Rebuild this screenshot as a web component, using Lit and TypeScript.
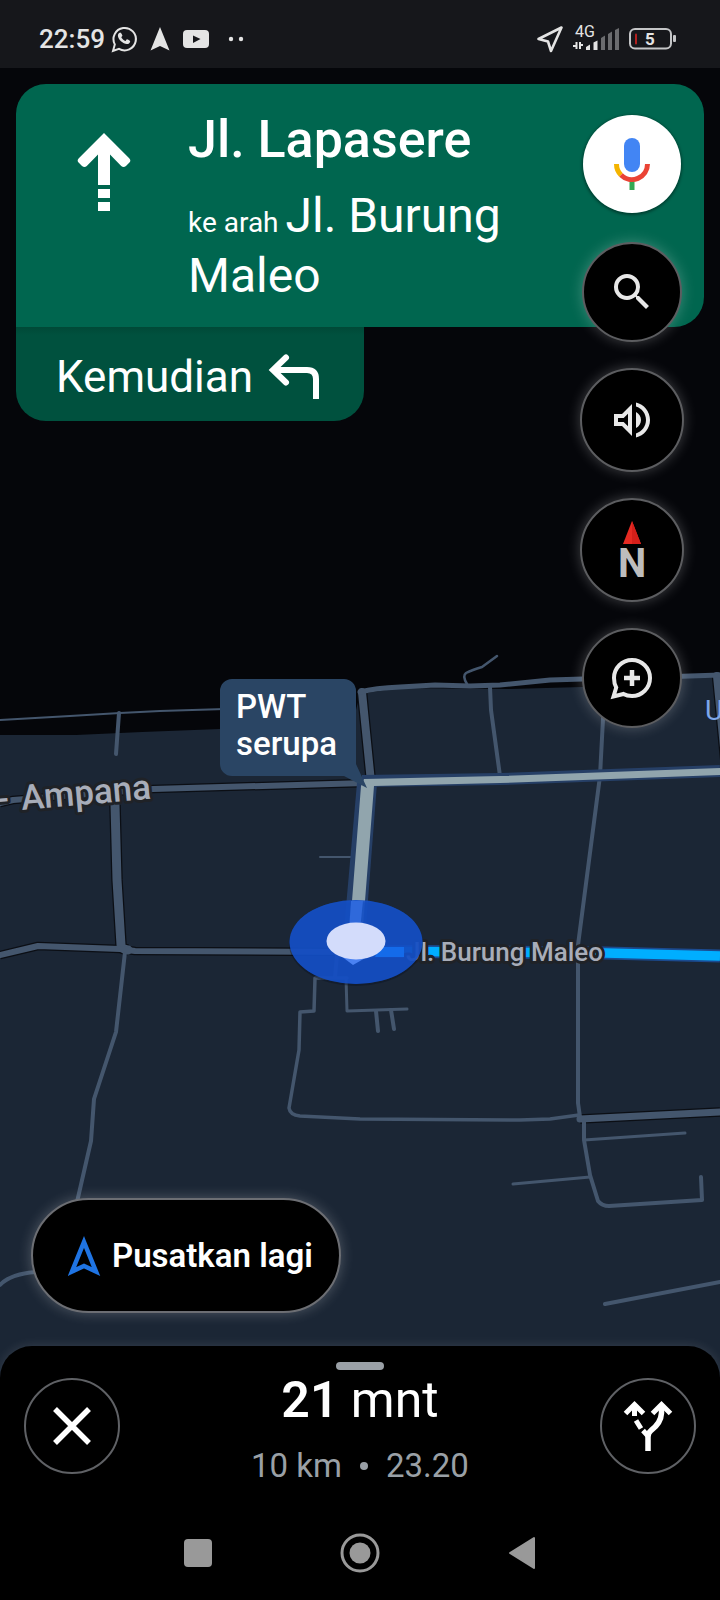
import { LitElement, html, svg, css } from "lit";
import { customElement } from "lit/decorators.js";

interface Road {
  d: string;
  w: number;
  edged?: boolean;
}

const ROADS: Road[] = [
  { d: "M0 720 L70 716 L120 713 L160 711 L225 709", w: 2 },
  { d: "M119 713 L116 754", w: 4 },
  { d: "M467 684 Q462 676 466 673 Q472 670 482 667 L497 656", w: 2.5 },
  { d: "M490 687 L491 710 L500 776", w: 4 },
  { d: "M604 700 L600 776 L578 945 L578 1103 L580 1117", w: 4 },
  { d: "M320 857 L352 857", w: 2 },
  { d: "M125 952 L116 1032 L94 1099 L91 1141 L77 1202", w: 4 },
  { d: "M0 1285 Q10 1274 36 1272", w: 4 },
  { d: "M337 955 L335 977", w: 4 },
  { d: "M347 978 L315 978 L314 1011 L300 1012 L299 1050 L289 1108 Q290 1115 300 1116 L360 1119 L520 1120 L550 1119 L579 1115", w: 3.5 },
  { d: "M346 978 L347 1011 L407 1009", w: 3 },
  { d: "M376 1011 L378 1031", w: 4 },
  { d: "M391 1010 L394 1029", w: 4 },
  { d: "M584 1122 L584 1140 L590 1175 L598 1201 Q602 1206 609 1206 L702 1200 L701 1177", w: 4 },
  { d: "M584 1140 L685 1133", w: 3 },
  { d: "M590 1177 L513 1184", w: 3 },
  { d: "M605 1304 L720 1282", w: 4 },
  { d: "M362 692 L371 782", w: 8, edged: true },
  { d: "M717 676 L726 768", w: 8, edged: true },
  { d: "M0 803 L13 800 L153 789 L366 783", w: 6, edged: true },
  { d: "M115 805 L117 880 L121 945 Q121 949 128 950", w: 9, edged: true },
  { d: "M0 955 L38 946 L120 949 L135 951 L350 952", w: 6, edged: true },
  { d: "M580 1119 L720 1112", w: 7, edged: true },
  { d: "M360 692 Q375 688 400 687 L435 685 L470 686 L500 685 L550 680 L583 679 L660 677 L720 675", w: 5 },
];

@customElement("status-bar")
class StatusBar extends LitElement {
  static styles = css`
    :host {
      display: flex;
      align-items: center;
      justify-content: space-between;
      box-sizing: border-box;
      height: 68px;
      padding: 10px 43px 0 39px;
      background: #16171b;
      color: #e4e4e4;
      font-family: Roboto, sans-serif;
    }
    .group { display: flex; align-items: center; gap: 13px; }
    .clock { font-size: 26px; line-height: 32px; font-weight: 500; }
    .left { gap: 6px; }
    .right { gap: 10px; }
    .dots { margin-left: 6px; }
    svg { display: block; overflow: visible; }
    .net { font-size: 16px; fill: #e4e4e4; }
    .battery { font-size: 17px; font-weight: 700; fill: #e4e4e4; }
  `;

  render() {
    return html`
      <div class="group left">
        <time class="clock">22:59</time>
        <div class="group">
          <svg width="26" height="28" viewBox="0 0 26 28" aria-hidden="true">
            <path d="M2 26 L3.8 19.4 A11.2 11.2 0 1 1 8 23.8 Z" fill="none" stroke="#e4e4e4" stroke-width="2"/>
            <path d="M9.2 7.4c-.6 0-2.3 1.1-2.3 3.2 0 3.9 5.3 8.5 8.9 8.5 2 0 3.4-1.4 3.4-2.9 0-.5-2.6-1.9-3.2-1.9s-1 1.7-1.6 1.7c-1 0-4-2.7-4-3.7 0-.5 1-1 1-1.7 0-.6-1.1-3.2-2.2-3.2z" fill="#e4e4e4"/>
          </svg>
          <svg width="20" height="24" viewBox="0 0 20 24" aria-hidden="true">
            <path d="M10 0 L19.5 23.5 L10 19 L.5 23.5 Z" fill="#e4e4e4"/>
          </svg>
          <svg width="26" height="18" viewBox="0 0 26 18" aria-hidden="true">
            <rect width="26" height="18" rx="4" fill="#e4e4e4"/>
            <path d="M10 5.5 L17.5 9 L10 13 Z" fill="#16171b"/>
          </svg>
          <svg class="dots" width="16" height="6" viewBox="0 0 16 6" aria-hidden="true">
            <circle cx="3" cy="3" r="2.2" fill="#e4e4e4"/>
            <circle cx="13" cy="3" r="2.2" fill="#e4e4e4"/>
          </svg>
        </div>
      </div>
      <div class="group right">
        <svg width="26" height="27" viewBox="0 0 26 27" aria-hidden="true">
          <path d="M24.5 1.5 L14 25 L11 15.5 L1.5 13 Z" fill="none" stroke="#e4e4e4" stroke-width="2.6" stroke-linejoin="round"/>
        </svg>
        <svg width="46" height="26" viewBox="0 0 46 26" aria-label="4G">
          <text class="net" x="2" y="11">4G</text>
          <path d="M3.500 16 V23 M0 20 H3 M7 23 V16 M7 19 H10" stroke="#e4e4e4" stroke-width="2" fill="none"/>
          <path d="M13 24 V21 L17 18.5 V24 Z M20.5 24 V16.5 L24.5 14.5 V24 Z" fill="#e4e4e4"/>
          <path d="M28 24 V12 L32 9.5 V24 Z M35 24 V8 L39 5.5 V24 Z M42 24 V4 L46 2 V24 Z" fill="#6b6c6f"/>
        </svg>
        <svg width="48" height="22" viewBox="0 0 48 22" aria-label="5%">
          <rect x="1" y="1" width="41" height="19.5" rx="5" fill="none" stroke="#c4c5c7" stroke-width="2"/>
          <rect x="44" y="7" width="3" height="7" rx="1" fill="#c4c5c7"/>
          <rect x="6" y="5.5" width="2" height="11" rx="1" fill="#b3201f"/>
          <text class="battery" x="16" y="17">5</text>
        </svg>
      </div>
    `;
  }
}

@customElement("route-map")
class RouteMap extends LitElement {
  static styles = css`
    :host { display: block; position: relative; background: #05060a; overflow: hidden; }
    .canvas { position: absolute; inset: 0; width: 100%; height: 100%; font-family: Roboto, sans-serif; font-weight: 500; }
    .road { fill: none; stroke: #44566d; stroke-linecap: round; stroke-linejoin: round; }
    .edge { stroke: #0b0e14; stroke-linecap: butt; }
    .route { fill: none; stroke-linejoin: round; }
    .label { fill: #a8adb9; stroke: #1f2227; stroke-width: 6px; paint-order: stroke; stroke-linejoin: round; }
    .big { font-size: 35px; }
    .street { font-size: 26px; }
    .place { font-size: 28px; font-weight: 400; fill: #7fa8ea; }
    .tag { font-size: 33px; fill: #fff; }
  `;

  render() {
    return html`
      <svg class="canvas" viewBox="0 68 720 1438" preserveAspectRatio="xMidYMin slice" role="img" aria-label="Peta">
        <path d="M0 735 L76 735 L142 732 L220 729 L352 726 L360 694 L400 688 L510 689 L582 687 L640 684 L645 679 L720 677 V1506 H0 Z" fill="#1b2635"/>
        ${ROADS.filter((r) => r.edged).map((r) => svg`<path class="road edge" d=${r.d} stroke-width=${r.w + 2.5}></path>`)}
        ${ROADS.map((r) => svg`<path class="road" d=${r.d} stroke-width=${r.w}></path>`)}
        <path class="route" d="M345 951 L606 953 L720 956" stroke="#1b4a8f" stroke-width="13"/>
        <path d="M357 783 L377 783 L364 952 L342 952 Z" fill="#263f66"/>
        <path class="route" d="M362 781 L500 779 L720 771" stroke="#263f66" stroke-width="12"/>
        <path class="route" d="M345 951 L606 953 L720 956" stroke="#00aeff" stroke-width="9.5"/>
        <path d="M364 779 L500 776 L720 768 V775 L500 783 L374 786 L361 952 L348 952 L361 786 Z" fill="#91a5ad"/>
        <text class="label big" transform="translate(22 810) rotate(-5)">Ampana</text>
        <text class="label big" transform="translate(-2 811) rotate(-5)">-</text>
        <text class="label street" x="406" y="961">Jl. Burung Maleo</text>
        <text class="place" x="705" y="720">U</text>
        <path d="M232 679 H344 A12 12 0 0 1 356 691 V764 L367 788 L344 776 H232 A12 12 0 0 1 220 764 V691 A12 12 0 0 1 232 679 Z" fill="#2a4564"/>
        <text class="tag" x="236" y="718">PWT</text>
        <text class="tag" x="236" y="755">serupa</text>
        <ellipse cx="356" cy="944" rx="67" ry="42" fill="#0a1220" opacity=".4"/>
        <ellipse cx="356" cy="942" rx="66.5" ry="42" fill="#1550cb" opacity=".82"/>
        <ellipse cx="356" cy="942" rx="66.5" ry="42" fill="#1553cc" opacity=".4"/>
        <path d="M351 901 L363 901 L360 930 L349 930 Z" fill="#2f69db"/>
        <path d="M380 947 L404 947 V957 L375 957 Z" fill="#146bea"/>
        <path d="M341 956 L367 957 L353 965 Z" fill="#4a82f2"/>
        <ellipse cx="356" cy="941" rx="29.5" ry="18.5" fill="#d3dcfb"/>
      </svg>
    `;
  }
}

@customElement("app-root")
class AppRoot extends LitElement {
  static styles = css`
    :host {
      display: grid;
      grid-template-columns: minmax(0, 1fr);
      grid-template-rows: auto 1fr auto auto;
      min-height: 100vh;
      background: #000;
      color: #fff;
      font-family: Roboto, sans-serif;
    }
    button {
      display: flex;
      align-items: center;
      justify-content: center;
      box-sizing: border-box;
      margin: 0;
      padding: 0;
      border: 0;
      background: none;
      color: inherit;
      font-family: inherit;
      cursor: pointer;
    }
    svg { display: block; flex: none; overflow: visible; }
    p, h1 { margin: 0; font-weight: 400; }

    .map { grid-area: 2 / 1 / 4 / 2; }

    .stage {
      grid-area: 2 / 1 / 3 / 2;
      position: relative;
      display: grid;
      grid-template-columns: minmax(0, 1fr);
      grid-template-rows: auto 1fr;
    }
    .guidance { grid-area: 1 / 1 / 2 / 2; padding: 16px 16px 0; }
    .step {
      display: flex;
      align-items: flex-start;
      gap: 58px;
      padding: 26px 132px 21px 62px;
      border-radius: 30px 30px 30px 0;
      background: #00664f;
    }
    .ahead { margin-top: 23px; }
    .road { font-size: 52px; line-height: 60px; font-weight: 500; }
    .toward { margin-top: 16px; font-size: 48px; line-height: 60px; }
    .small { font-size: 28px; line-height: 28px; }
    .next {
      display: flex;
      align-items: center;
      gap: 16px;
      width: fit-content;
      padding: 20px 45px 14px 40px;
      border-radius: 0 0 30px 30px;
      background: linear-gradient(#004937, #00513e 8px);
      font-size: 44px;
      line-height: 60px;
    }

    .tools {
      grid-area: 1 / 1 / 3 / 2;
      justify-self: end;
      align-self: start;
      display: flex;
      flex-direction: column;
      align-items: center;
      gap: 26px;
      padding: 46px 36px 26px 0;
    }
    .tool {
      width: 100px;
      height: 100px;
      border: 2px solid #5c5d60;
      border-radius: 50%;
      background: #000;
      box-shadow: 0 0 14px rgba(255, 255, 255, 0.24);
    }
    .large { width: 104px; height: 104px; }
    .voice {
      margin-bottom: 2px;
      border: 1px solid transparent;
      background: #fff padding-box;
      box-shadow: 0 1px 3px rgba(0, 0, 0, 0.4);
    }
    .compass { flex-direction: column; padding-top: 4px; color: #bdbdbd; font-size: 40px; line-height: 40px; font-weight: 700; }

    .recenter {
      grid-area: 2 / 1 / 3 / 2;
      align-self: end;
      justify-self: start;
      gap: 12px;
      height: 115px;
      margin: 0 0 33px 31px;
      padding: 0 26px 0 35px;
      border: 2px solid #6c6e73;
      border-radius: 58px;
      background: #000;
      box-shadow: 0 0 14px rgba(255, 255, 255, 0.24);
      font-size: 33px;
      line-height: 40px;
      font-weight: 600;
    }

    .sheet {
      grid-area: 3 / 1 / 4 / 2;
      position: relative;
      padding: 16px 24px 20px;
      border-radius: 32px 32px 0 0;
      background: #000;
      box-shadow: 0 0 12px rgba(255, 255, 255, 0.12);
    }
    .grip { width: 48px; height: 8px; margin: 0 auto; border-radius: 4px; background: #9aa0a6; }
    .trip { display: flex; justify-content: space-between; align-items: flex-start; }
    .round { width: 96px; height: 96px; margin-top: 8px; border: 2px solid #5f6165; border-radius: 50%; }
    .summary { text-align: center; }
    .eta { font-size: 50px; line-height: 60px; }
    .eta strong { font-weight: 600; }
    .detail { display: flex; justify-content: center; align-items: center; gap: 18px; margin-top: 16px; color: #9aa0a6; font-size: 33px; line-height: 40px; }
    .dot { width: 8px; height: 8px; border-radius: 50%; background: #9aa0a6; }

    .system {
      grid-area: 4 / 1 / 5 / 2;
      position: relative;
      display: flex;
      justify-content: center;
      align-items: center;
      gap: 114px;
      height: 94px;
      background: #000;
    }
    .key { width: 48px; height: 48px; }
  `;

  render() {
    return html`
      <status-bar></status-bar>
      <route-map class="map"></route-map>

      <main class="stage">
        <section class="guidance">
          <div class="step">
            <svg class="ahead" width="52" height="78" viewBox="0 0 52 78" aria-hidden="true">
              <path d="M26 0 L51.2 25.2 Q53.5 27.5 51.2 29.8 L48 33 Q45.5 35 43.2 33 L32 21.5 V52 H20 V21.5 L8.8 33 Q6.5 35 4 33 L.8 29.8 Q-1.5 27.5 .8 25.2 Z M20 56 H32 V65 H20 Z M20 69 H32 V78 H20 Z" fill="#fff"/>
            </svg>
            <div>
              <h1 class="road">Jl. Lapasere</h1>
              <p class="toward"><span class="small">ke arah </span>Jl. Burung Maleo</p>
            </div>
          </div>
          <div class="next">
            <span>Kemudian</span>
            <svg width="50" height="44" viewBox="0 0 50 44" aria-hidden="true">
              <path d="M5 15 H38 Q47 15 47 24 V44" fill="none" stroke="#fff" stroke-width="6"/>
              <path d="M17 2.5 L4 15 L17 27.5" fill="none" stroke="#fff" stroke-width="6" stroke-linecap="round"/>
            </svg>
          </div>
        </section>

        <nav class="tools">
          <button class="tool voice" aria-label="Perintah suara">
            <svg width="36" height="52" viewBox="0 0 36 52">
              <rect x="10" y="0" width="16" height="34" rx="8" fill="#4285f4"/>
              <rect x="15.5" y="42" width="5" height="10" fill="#34a853"/>
              <path d="M2.5 26 A15.5 15.5 0 0 0 7 37" fill="none" stroke="#f4b400" stroke-width="5"/>
              <path d="M7 37 A15.5 15.5 0 0 0 33.5 26" fill="none" stroke="#ea4335" stroke-width="5"/>
            </svg>
          </button>
          <button class="tool" aria-label="Cari">
            <svg width="48" height="48" viewBox="0 0 24 24" fill="#e8e8e8">
              <path d="M15.5 14h-.79l-.28-.27A6.471 6.471 0 0 0 16 9.5 6.5 6.5 0 1 0 9.5 16c1.61 0 3.09-.59 4.23-1.57l.27.28v.79l5 4.99L20.49 19l-4.99-5zm-6 0C7.01 14 5 11.99 5 9.5S7.01 5 9.5 5 14 7.01 14 9.5 11.99 14 9.5 14z"/>
            </svg>
          </button>
          <button class="tool large" aria-label="Suara">
            <svg width="48" height="48" viewBox="0 0 24 24" fill="#e8e8e8">
              <path d="M3 9v6h4l5 5V4L7 9H3zm7-.17v6.34L7.83 13H5v-2h2.83L10 8.83z M16.5 12c0-1.77-1.02-3.29-2.5-4.03v8.05c1.48-.73 2.5-2.25 2.5-4.02z M14 3.23v2.06c2.89.86 5 3.54 5 6.71s-2.11 5.85-5 6.71v2.06c4.01-.91 7-4.49 7-8.77s-2.99-7.86-7-8.77z"/>
            </svg>
          </button>
          <button class="tool large compass" aria-label="Kompas, utara">
            <svg width="18" height="23" viewBox="0 0 18 23">
              <path d="M9 0 L18 23 H0 Z" fill="#e62a22"/>
              <path d="M9 0 L18 23 H9 Z" fill="#d41f1a"/>
            </svg>
            <span>N</span>
          </button>
          <button class="tool" aria-label="Laporkan">
            <svg width="48" height="48" viewBox="0 0 48 48" fill="none" stroke="#e8e8e8" stroke-width="4">
              <path d="M5.5 42.5 L8.2 33.5 Q6 29.5 6 24 A18 18 0 1 1 24 42 Q19 42 15.5 40 Z"/>
              <path d="M24 16 V32 M16 24 H32" stroke-width="4.5"/>
            </svg>
          </button>
        </nav>

        <button class="recenter">
          <svg width="32" height="38" viewBox="0 0 32 38" aria-hidden="true">
            <path d="M16 5 L28 34.5 L16 29 L4 34.5 Z" fill="none" stroke="#1f74e3" stroke-width="4.5"/>
          </svg>
          <span>Pusatkan lagi</span>
        </button>
      </main>

      <section class="sheet">
        <div class="grip"></div>
        <div class="trip">
          <button class="round" aria-label="Tutup">
            <svg width="38" height="38" viewBox="0 0 38 38">
              <path d="M2 2 L36 36 M36 2 L2 36" stroke="#fff" stroke-width="5.5"/>
            </svg>
          </button>
          <div class="summary">
            <p class="eta"><strong>21</strong> mnt</p>
            <p class="detail"><span>10 km</span><span class="dot"></span><span>23.20</span></p>
          </div>
          <button class="round" aria-label="Rute alternatif">
            <svg width="50" height="52" viewBox="0 0 50 52" fill="none" stroke="#fff">
              <path d="M25 51 V37 Q25 33 28 30.5 Q38 23 38.5 13 V5" stroke-width="5.5"/>
              <path d="M2.5 13.5 L11.5 4.5 L20.5 13.5 M29.5 13.5 L38.5 4.5 L47.5 13.5" stroke-width="5"/>
              <path d="M11.5 5 V16 M13 20.5 L18 28.5 M20 30.5 L25 36" stroke-width="5"/>
            </svg>
          </button>
        </div>
      </section>

      <nav class="system">
        <button class="key" aria-label="Aplikasi terbaru">
          <svg width="28" height="28" viewBox="0 0 28 28"><rect width="28" height="28" rx="4" fill="#999"/></svg>
        </button>
        <button class="key" aria-label="Beranda">
          <svg width="40" height="40" viewBox="0 0 40 40">
            <circle cx="20" cy="20" r="18" fill="none" stroke="#999" stroke-width="3"/>
            <circle cx="20" cy="20" r="10.5" fill="#999"/>
          </svg>
        </button>
        <button class="key" aria-label="Kembali">
          <svg width="28" height="34" viewBox="0 0 28 34">
            <path d="M2 17 L26 2 V32 Z" fill="#999" stroke="#999" stroke-width="2" stroke-linejoin="round"/>
          </svg>
        </button>
      </nav>
    `;
  }
}
